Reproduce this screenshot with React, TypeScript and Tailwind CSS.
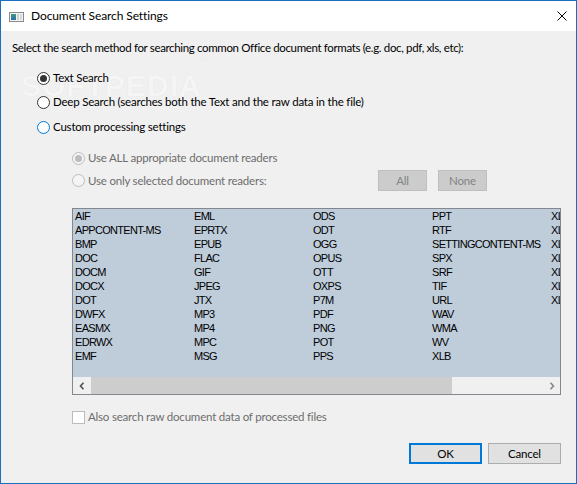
import React from 'react';

const columns: string[][] = [
  ['AIF', 'APPCONTENT-MS', 'BMP', 'DOC', 'DOCM', 'DOCX', 'DOT', 'DWFX', 'EASMX', 'EDRWX', 'EMF'],
  ['EML', 'EPRTX', 'EPUB', 'FLAC', 'GIF', 'JPEG', 'JTX', 'MP3', 'MP4', 'MPC', 'MSG'],
  ['ODS', 'ODT', 'OGG', 'OPUS', 'OTT', 'OXPS', 'P7M', 'PDF', 'PNG', 'POT', 'PPS'],
  ['PPT', 'RTF', 'SETTINGCONTENT-MS', 'SPX', 'SRF', 'TIF', 'URL', 'WAV', 'WMA', 'WV', 'XLB'],
  ['XLS', 'XLSB', 'XLSM', 'XLSX', 'XLT', 'XLTM', 'XLTX'],
];

interface RadioProps {
  label: string;
  checked?: boolean;
  disabled?: boolean;
  focused?: boolean;
}

const Radio: React.FC<RadioProps> = ({ label, checked, disabled, focused }) => {
  const ring = disabled
    ? 'border-[#bcbcbc] bg-[#f4f4f4]'
    : focused
      ? 'border-[#0078d7] bg-white'
      : 'border-[#333333] bg-white';
  return (
    <div className="flex items-center h-[16px]">
      <span className={`w-[13px] h-[13px] rounded-full border flex items-center justify-center shrink-0 ${ring}`}>
        {checked && (
          <span className={`w-[7px] h-[7px] rounded-full ${disabled ? 'bg-[#bcbcbc]' : 'bg-[#333333]'}`} />
        )}
      </span>
      <span className={`ml-[3px] leading-[16px] whitespace-nowrap ${disabled ? 'text-[#6d6d6d]' : 'text-black'}`}>
        {label}
      </span>
    </div>
  );
};

const AppIcon = () => (
  <svg width="15" height="10" viewBox="0 0 15 10">
    <defs>
      <linearGradient id="pane" x1="0" y1="0" x2="0" y2="1">
        <stop offset="0" stopColor="#3f9a86" />
        <stop offset="1" stopColor="#2f6fa8" />
      </linearGradient>
    </defs>
    <rect x="0.5" y="0.5" width="14" height="9" fill="#f4f4f4" stroke="#8a8a8a" />
    <rect x="2" y="2" width="5" height="6" fill="url(#pane)" />
    <rect x="8" y="2" width="2" height="6" fill="#c8d6c8" />
    <rect x="11" y="2" width="2" height="6" fill="#d8d8d8" />
  </svg>
);

const Chevron = ({ dir, color }: { dir: 'left' | 'right'; color: string }) => (
  <svg width="6" height="8" viewBox="0 0 6 8">
    <polyline
      points={dir === 'left' ? '4.5,0.8 1.5,4 4.5,7.2' : '1.5,0.8 4.5,4 1.5,7.2'}
      fill="none"
      stroke={color}
      strokeWidth="1.6"
    />
  </svg>
);

export default function App() {
  return (
    <div
      className="relative w-[577px] h-[484px] border border-[#1c6fbf] bg-[#f0f0f0] flex flex-col text-[11.5px] tracking-[-0.2px] text-black overflow-hidden"
      style={{ fontFamily: 'Lato, "Noto Sans", sans-serif' }}
    >
      {/* watermark, sits under the dialog text */}
      <span
        className="pointer-events-none absolute left-[20px] top-[62px] text-[30px] font-bold tracking-[1px] text-[#f5f5f5] [text-shadow:0_0_1px_rgba(0,0,0,0.08)]"
        style={{ fontFamily: '"Liberation Sans", Arial, sans-serif' }}
      >
        SOFTPEDIA<sup className="text-[9px] align-top">®</sup>
      </span>

      {/* title bar */}
      <div className="relative h-[30px] bg-white flex items-center shrink-0">
        <div className="ml-[8px] mt-[1px] flex items-center">
          <AppIcon />
        </div>
        <span className="ml-[7px] text-[12px] leading-[16px] tracking-[-0.1px]">Document Search Settings</span>
        <svg className="ml-auto mr-[9px]" width="10" height="10" viewBox="0 0 10 10">
          <path d="M0.5 0.5 L9.5 9.5 M9.5 0.5 L0.5 9.5" stroke="#000" strokeWidth="1" />
        </svg>
      </div>

      {/* body */}
      <div className="relative flex flex-col">
        <p className="mt-[9px] ml-[11px] leading-[16px] whitespace-nowrap tracking-[-0.35px]">
          Select the search method for searching common Office document formats (e.g. doc, pdf, xls, etc):
        </p>

        <div className="ml-[36px] mt-[14px]">
          <Radio label="Text Search" checked />
        </div>
        <div className="ml-[36px] mt-[8px]">
          <Radio label="Deep Search (searches both the Text and the raw data in the file)" />
        </div>
        <div className="ml-[36px] mt-[9px]">
          <Radio label="Custom processing settings" focused />
        </div>

        <div className="ml-[71px] mt-[15px]">
          <Radio label="Use ALL appropriate document readers" checked disabled />
        </div>
        <div className="ml-[71px] mt-[4px] w-[415px] h-[21px] flex items-center">
          <Radio label="Use only selected document readers:" disabled />
          <div className="ml-auto flex gap-[11px]">
            <button className="w-[49px] h-[21px] bg-[#cccccc] border border-[#bfbfbf] text-[#838383] leading-[19px]">
              All
            </button>
            <button className="w-[49px] h-[21px] bg-[#cccccc] border border-[#bfbfbf] text-[#838383] leading-[19px]">
              None
            </button>
          </div>
        </div>

        {/* reader list */}
        <div className="ml-[71px] mt-[17px] w-[489px] h-[187px] border border-[#828790] flex flex-col">
          <div className="flex-1 bg-[#bfcddb] overflow-hidden">
            <div
              className="flex pl-[2px] text-[11px] tracking-[-0.7px] text-black"
              style={{ fontFamily: '"Liberation Sans", Arial, sans-serif' }}
            >
              {columns.map((col, i) => (
                <div key={i} className="w-[119px] shrink-0 flex flex-col">
                  {col.map((item) => (
                    <span key={item} className="h-[14px] leading-[14px] whitespace-nowrap">
                      {item}
                    </span>
                  ))}
                </div>
              ))}
            </div>
          </div>
          <div className="h-[17px] bg-[#f0f0f0] flex items-stretch shrink-0">
            <div className="w-[17px] flex items-center justify-center">
              <Chevron dir="left" color="#505050" />
            </div>
            <div className="ml-[1px] w-[361px] bg-[#cdcdcd]" />
            <div className="ml-auto w-[17px] flex items-center justify-center">
              <Chevron dir="right" color="#868686" />
            </div>
          </div>
        </div>

        <div className="ml-[71px] mt-[14px] h-[16px] flex items-center">
          <span className="w-[13px] h-[13px] border border-[#bcbcbc] bg-white" />
          <span className="ml-[3px] text-[#6d6d6d] leading-[16px]">Also search raw document data of processed files</span>
        </div>

        <div className="mt-[18px] flex justify-end pr-[15px] gap-[6px]">
          <button className="w-[73px] h-[21px] bg-[#e1e1e1] border-2 border-[#0078d7] leading-[17px]">OK</button>
          <button className="w-[73px] h-[21px] bg-[#e1e1e1] border border-[#adadad] leading-[19px]">Cancel</button>
        </div>
      </div>
    </div>
  );
}
